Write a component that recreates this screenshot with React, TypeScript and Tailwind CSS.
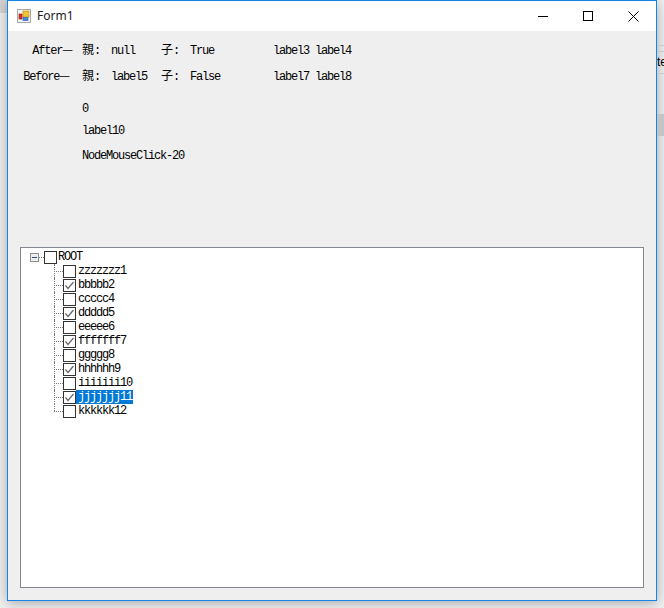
import React from 'react';

const mono = "font-['Liberation_Mono','Noto_Sans_CJK_SC',monospace] text-[12px] leading-[14px] tracking-[-1.2px] text-black whitespace-pre";
const cjk = "font-['Noto_Sans_CJK_SC',sans-serif] tracking-normal";

const nodes = [
  { text: 'zzzzzzz1', checked: false },
  { text: 'bbbbb2', checked: true },
  { text: 'ccccc4', checked: false },
  { text: 'ddddd5', checked: true },
  { text: 'eeeee6', checked: false },
  { text: 'fffffff7', checked: true },
  { text: 'ggggg8', checked: false },
  { text: 'hhhhhh9', checked: true },
  { text: 'iiiiiii10', checked: false },
  { text: 'jjjjjjj11', checked: true, selected: true },
  { text: 'kkkkkk12', checked: false },
];

const CheckBox = ({ checked }: { checked: boolean }) => (
  <div className="w-[13px] h-[13px] border border-[#333333] bg-white shrink-0 flex items-center justify-center">
    {checked && (
      <svg width="11" height="11" viewBox="0 0 11 11">
        <path d="M1.5 5.5 L4 8.5 L9.5 2" fill="none" stroke="#666666" strokeWidth="1.2" />
      </svg>
    )}
  </div>
);

const TreeRow = ({ text, checked, selected, last }: { text: string; checked: boolean; selected?: boolean; last?: boolean }) => (
  <div className="flex items-center h-[14px] ml-[33px]">
    <div className="w-[9px] h-[14px] relative shrink-0">
      <div className={`absolute left-0 top-0 w-0 border-l border-dotted border-[#777777] ${last ? 'h-[7px]' : 'h-[14px]'}`} />
      <div className="absolute left-0 top-[7px] w-[9px] border-t border-dotted border-[#777777]" />
    </div>
    <CheckBox checked={checked} />
    <div className={`${mono} pl-[2px] pr-[1px] h-[14px] ${selected ? 'bg-[#0078d7] text-white' : ''}`}>{text}</div>
  </div>
);

const InfoRow = ({ side, sidePad, parent, child, a, b }: { side: string; sidePad: string; parent: string; child: string; a: string; b: string }) => (
  <div className="flex h-[14px]">
    <div className={`${mono} ${sidePad} w-[59px] -mt-[2px] text-right`}>{side}<span className={cjk}>—</span></div>
    <div className={`${mono} w-[29px] -mt-[2px]`}><span className={cjk}>親</span>:</div>
    <div className={`${mono} w-[50px]`}>{parent}</div>
    <div className={`${mono} w-[29px] -mt-[2px]`}><span className={cjk}>子</span>:</div>
    <div className={`${mono} w-[83px]`}>{child}</div>
    <div className={mono}>{a} {b}</div>
  </div>
);

export default function App() {
  return (
    <div className="w-[664px] h-[608px] overflow-hidden bg-[#f0f0f0] flex">
      {/* desktop behind the form, left */}
      <div className="w-[7px] shrink-0 flex flex-col">
        <div className="h-[13px] bg-[#d4d4d4]" />
      </div>

      <div className="w-[650px] h-[601px] shrink-0 border border-[#1484e6] bg-[#efefef] flex flex-col shadow-[0_2px_12px_rgba(0,0,0,0.3)]">
        {/* title bar */}
        <div className="h-[30px] bg-white flex items-center shrink-0">
          <svg width="14" height="14" viewBox="0 0 14 14" className="ml-[9px]">
            <rect x="0.5" y="0.5" width="13" height="13" fill="#f2f2f2" stroke="#a8a8a8" />
            <rect x="6" y="2" width="6" height="6" fill="#f4c430" stroke="#b8860b" strokeWidth="0.6" />
            <rect x="2" y="5" width="3" height="5" fill="#d8322a" stroke="#8c1a14" strokeWidth="0.6" />
            <rect x="6" y="8.5" width="5" height="3" fill="#4a86d8" stroke="#2a5aa0" strokeWidth="0.6" />
          </svg>
          <span className="ml-[6px] font-['Noto_Sans','Open_Sans',sans-serif] text-[12px] text-[#1a1a1a]">Form1</span>
          <div className="ml-auto flex items-center">
            <div className="w-[45px] h-[30px] flex items-center justify-center">
              <svg width="10" height="10" viewBox="0 0 10 10"><path d="M0 5.5 H10" stroke="#000" /></svg>
            </div>
            <div className="w-[46px] h-[30px] flex items-center justify-center">
              <svg width="10" height="10" viewBox="0 0 10 10"><rect x="0.5" y="0.5" width="9" height="9" fill="none" stroke="#000" /></svg>
            </div>
            <div className="w-[45px] h-[30px] flex items-center justify-center">
              <svg width="11" height="11" viewBox="0 0 11 11"><path d="M0.5 0.5 L10.5 10.5 M10.5 0.5 L0.5 10.5" stroke="#000" /></svg>
            </div>
          </div>
        </div>

        {/* labels */}
        <div className="pt-[13px] pl-[15px] flex flex-col">
          <InfoRow side="After" sidePad="pr-[9px]" parent="null" child="True" a="label3" b="label4" />
          <div className="mt-[12px]">
            <InfoRow side="Before" sidePad="pr-[12px]" parent="label5" child="False" a="label7" b="label8" />
          </div>
          <div className={`${mono} ml-[59px] mt-[18px]`}>0</div>
          <div className={`${mono} ml-[59px] mt-[8px]`}>label10</div>
          <div className={`${mono} ml-[59px] mt-[11px]`}>NodeMouseClick-20</div>
        </div>

        {/* tree view */}
        <div className="mt-[84px] mx-[12px] h-[341px] border border-[#828790] bg-white pt-[2px]">
          <div className="flex items-center h-[14px] ml-[9px]">
            <div className="w-[9px] h-[9px] border border-[#8e8f8f] bg-[#eeeeee] flex items-center justify-center shrink-0">
              <div className="w-[5px] h-px bg-[#2a4a8a]" />
            </div>
            <div className="w-[5px] border-t border-dotted border-[#777777]" />
            <CheckBox checked={false} />
            <div className={`${mono} ml-px`}>ROOT</div>
          </div>
          {nodes.map((n, i) => (
            <TreeRow key={n.text} text={n.text} checked={n.checked} selected={n.selected} last={i === nodes.length - 1} />
          ))}
        </div>
      </div>

      {/* desktop behind the form, right */}
      <div className="w-[7px] shrink-0 flex flex-col overflow-hidden">
        <div className="h-[46px] border-b border-[#cccccc]" />
        <div className="h-[6px] border-b border-[#cccccc]" />
        <div className="h-[22px] border-b border-[#cccccc] text-[12px] font-['Liberation_Sans',sans-serif] leading-[20px] whitespace-nowrap">te</div>
        <div className="h-[40px]" />
        <div className="h-[22px] bg-[#c4c4c4]" />
      </div>
    </div>
  );
}
